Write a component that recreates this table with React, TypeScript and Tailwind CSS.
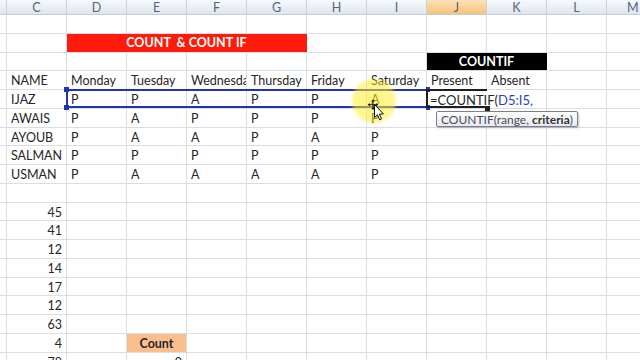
import React from 'react'

const line = 'border-[#d9dde4]'
const colLetters = ['C', 'D', 'E', 'F', 'G', 'H', 'I', 'J', 'K', 'L']

function Cell({
  children,
  className = '',
}: {
  children?: React.ReactNode
  className?: string
}) {
  return (
    <div
      className={`flex h-full w-[60px] shrink-0 items-center overflow-hidden whitespace-nowrap border-r ${line} px-[4px] pt-[3px] ${className}`}
    >
      {children}
    </div>
  )
}

function Row({ children }: { children?: React.ReactNode }) {
  return (
    <div className={`flex h-[18.75px] shrink-0 border-b ${line}`}>
      <div className={`h-full w-[7px] shrink-0 border-r ${line}`} />
      {children}
      <div className="h-full flex-1" />
    </div>
  )
}

function Blanks({ n }: { n: number }) {
  return (
    <>
      {Array.from({ length: n }).map((_, i) => (
        <Cell key={i} />
      ))}
    </>
  )
}

const people = [
  ['AWAIS', 'P', 'A', 'P', 'P', 'P', 'P'],
  ['AYOUB', 'P', 'A', 'A', 'P', 'A', 'P'],
  ['SALMAN', 'P', 'P', 'P', 'P', 'P', 'P'],
  ['USMAN', 'P', 'A', 'A', 'A', 'A', 'P'],
]

const numbers = ['45', '41', '12', '14', '17', '12', '63', '4', '78']

function Cursor() {
  return (
    <svg width="22" height="24" viewBox="0 0 22 24" className="absolute left-[366px] top-[98px]">
      <path
        d="M7 1.5 L5.2 3.6 H6.5 V6.3 H3.8 V5 L1.7 6.8 L3.8 8.6 V7.3 H6.5 V10 H5.2 L7 12.1 L8.8 10 H7.5 V7.3 H10.2 V8.6 L12.3 6.8 L10.2 5 V6.3 H7.5 V3.6 H8.8 Z"
        fill="#111"
      />
      <path
        d="M8.5 6.5 L8.5 19.5 L11.5 16.8 L13.6 21.8 L15.5 21 L13.4 16.1 L17.4 15.9 Z"
        fill="#fff"
        stroke="#111"
        strokeWidth="1"
        strokeLinejoin="round"
      />
    </svg>
  )
}

export default function App() {
  return (
    <div className="relative h-[360px] w-[640px] overflow-hidden bg-white font-['Lato','Liberation_Sans',sans-serif] text-[12.5px] text-[#262626]">
      {/* column header */}
      <div className="flex h-[15px] border-b border-[#c3cdd9] bg-gradient-to-b from-[#f7f9fc] to-[#dfe5ee] text-[12.5px] leading-[15px] text-[#56647a]">
        <div className="w-[7px] shrink-0 border-r border-[#c8d1dd]" />
        {colLetters.map((c) => (
          <div
            key={c}
            className={`w-[60px] shrink-0 border-r border-[#c8d1dd] text-center ${
              c === 'J' ? 'bg-gradient-to-b from-[#fbe2b4] to-[#f6c27a]' : ''
            }`}
          >
            {c}
          </div>
        ))}
        <div className="flex-1 pl-[20px]">M</div>
      </div>

      {/* 1 */}
      <Row>
        <Blanks n={10} />
      </Row>

      {/* 2 banner */}
      <Row>
        <Cell />
        <div className="flex h-full w-[240px] shrink-0 items-center justify-center border-r border-[#ff1b0b] bg-[#ff1b0b] pt-[1px] text-[12.5px] font-bold text-white">
          COUNT&nbsp;&nbsp;&amp; COUNT IF
        </div>
        <Blanks n={5} />
      </Row>

      {/* 3 countif title */}
      <Row>
        <Blanks n={7} />
        <div className="flex h-full w-[120px] shrink-0 items-center justify-center border-r border-black bg-black pt-[1px] text-[12.5px] font-bold text-white">
          COUNTIF
        </div>
        <Cell />
      </Row>

      {/* 4 headings */}
      <Row>
        <Cell>NAME</Cell>
        <Cell>Monday</Cell>
        <Cell>Tuesday</Cell>
        <Cell>Wednesday</Cell>
        <Cell>Thursday</Cell>
        <Cell>Friday</Cell>
        <Cell>Saturday</Cell>
        <Cell>Present</Cell>
        <Cell>Absent</Cell>
        <Cell />
      </Row>

      {/* 5 selected row */}
      <Row>
        <Cell>IJAZ</Cell>
        <div className="relative flex h-full shrink-0">
          <Cell>P</Cell>
          <Cell>P</Cell>
          <Cell>A</Cell>
          <Cell>P</Cell>
          <Cell>P</Cell>
          <Cell>A</Cell>
          <div className="pointer-events-none absolute -left-[1.5px] -top-[1.5px] bottom-[-0.5px] right-[-1px] border-2 border-[#2233b0]" />
          <div className="absolute -left-[3px] -top-[3px] h-[5px] w-[5px] bg-[#2233b0]" />
          <div className="absolute -left-[3px] bottom-[-2px] h-[5px] w-[5px] bg-[#2233b0]" />
          <div className="absolute right-[-3px] -top-[3px] h-[5px] w-[4px] bg-[#2233b0]" />
          <div className="absolute right-[-3px] bottom-[-2px] h-[5px] w-[4px] bg-[#2233b0]" />
        </div>
        <div className="relative z-10 flex h-full w-[60px] shrink-0 items-center whitespace-nowrap pl-[3px] pt-[3px]">
          <span className="text-[13px]">=COUNTIF(</span>
          <span className="text-[13px] text-[#2f3fb8]">D5:I5,</span>
          <div className="pointer-events-none absolute -left-[1.5px] -top-[1.5px] bottom-[-0.5px] w-[61px] border-y-2 border-l-2 border-[#1e1e1e]" />
          <div className="absolute bottom-[-3px] left-[58px] h-[5px] w-[5px] bg-[#1e1e1e]" />
          <div className="absolute left-[9px] top-[21px] rounded-[2px] border border-[#7b7f88] bg-gradient-to-b from-white to-[#e6e8f0] px-[4px] pt-[1px] text-[12px] leading-[13px] text-[#4a4d55] shadow-[1px_1px_2px_rgba(0,0,0,0.25)]">
            COUNTIF(range, <b className="text-[#333]">criteria</b>)
          </div>
        </div>
        <div className={`h-full w-[60px] shrink-0 border-r ${line}`} />
        <Cell />
      </Row>

      {people.map((p) => (
        <Row key={p[0]}>
          {p.map((v, i) => (
            <Cell key={i}>{v}</Cell>
          ))}
          <Blanks n={3} />
        </Row>
      ))}

      {/* 10 */}
      <Row>
        <Blanks n={10} />
      </Row>

      {numbers.map((n, i) => (
        <Row key={i}>
          <Cell className="justify-end">{n}</Cell>
          <Cell />
          {i === 7 ? (
            <Cell className="justify-center bg-[#fbbf8e] font-bold">Count</Cell>
          ) : i === 8 ? (
            <Cell className="justify-end">0</Cell>
          ) : (
            <Cell />
          )}
          <Blanks n={7} />
        </Row>
      ))}

      {/* mouse highlight */}
      <div className="pointer-events-none absolute left-[350px] top-[77px] h-[48px] w-[48px] rounded-full bg-[radial-gradient(circle,rgba(255,238,40,0.6)_0%,rgba(255,238,40,0.5)_58%,rgba(255,238,40,0)_72%)]" />
      <Cursor />
    </div>
  )
}
